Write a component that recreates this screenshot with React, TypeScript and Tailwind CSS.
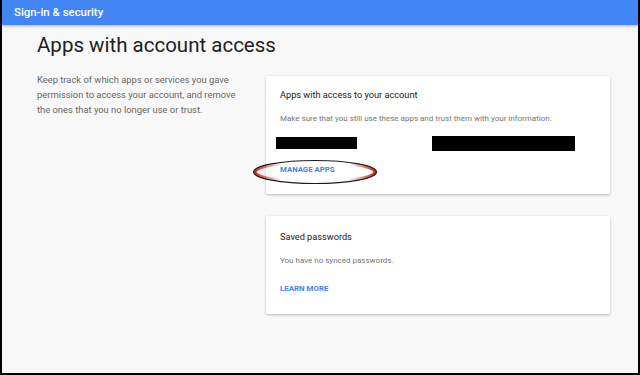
import React from 'react';

function Card({ children, className = '' }: { children: React.ReactNode; className?: string }) {
  return (
    <div className={`bg-white rounded-[2px] shadow-[0_1px_3px_rgba(0,0,0,0.25)] px-[14px] ${className}`}>
      {children}
    </div>
  );
}

export default function App() {
  return (
    <div
      className="w-[640px] h-[375px] bg-[#f8f8f8] border-l-2 border-r-2 border-b-2 border-black overflow-hidden flex flex-col"
      style={{ fontFamily: 'Roboto, "Liberation Sans", sans-serif' }}
    >
      {/* Top bar */}
      <div className="h-[25px] bg-[#4285f4] shadow-[0_1px_3px_rgba(0,0,0,0.3)] flex items-center pl-[12px] shrink-0">
        <span className="text-white text-[11.4px] font-medium">Sign-in &amp; security</span>
      </div>

      <div className="pl-[35px]">
        <h1 className="text-[20.5px] leading-none text-[#212121] mt-[10px]">Apps with account access</h1>

        <div className="flex mt-[22px]">
          <p className="w-[229px] text-[9.4px] leading-[15px] text-[#666] pr-4 -mt-[6px]">
            Keep track of which apps or services you gave permission to access your account, and remove the ones that you no longer use or trust.
          </p>

          <div className="w-[344px] flex flex-col gap-[22px] -mt-[2px]">
            {/* Apps card */}
            <Card className="relative h-[118px] pt-[12px]">
              <div className="text-[9.2px] text-[#212121] leading-[14px]">Apps with access to your account</div>
              <div className="text-[8px] text-[#757575] mt-[11px] leading-[12px]">
                Make sure that you still use these apps and trust them with your information.
              </div>
              <div className="flex mt-[11px] -ml-[4px]">
                <div className="w-[81px] h-[12px] bg-black mt-[1px]" />
                <div className="w-[143px] h-[15px] bg-black ml-[75px]" />
              </div>
              <div className="text-[7.8px] font-bold text-[#4a7fe6] mt-[13px] leading-[12px]">MANAGE APPS</div>
              <svg
                className="absolute left-[-14px] top-[83px]"
                width="126"
                height="26"
                viewBox="0 0 126 26"
              >
                <defs>
                  <linearGradient id="ends" x1="0" y1="0" x2="1" y2="0">
                    <stop offset="0" stopColor="#c62818" stopOpacity="1" />
                    <stop offset="0.22" stopColor="#c62818" stopOpacity="0" />
                    <stop offset="0.78" stopColor="#c62818" stopOpacity="0" />
                    <stop offset="1" stopColor="#c62818" stopOpacity="1" />
                  </linearGradient>
                </defs>
                <ellipse cx="63" cy="13" rx="60" ry="10" fill="none" stroke="url(#ends)" strokeWidth="3" />
                <ellipse cx="63" cy="13" rx="61.5" ry="11.5" fill="none" stroke="#1e1e1e" strokeWidth="1.2" />
              </svg>
            </Card>

            {/* Saved passwords card */}
            <Card className="h-[98px] pt-[14px]">
              <div className="text-[9.2px] text-[#212121] leading-[14px]">Saved passwords</div>
              <div className="text-[8px] text-[#757575] mt-[11px] leading-[12px]">You have no synced passwords.</div>
              <div className="text-[7.9px] font-bold text-[#4a7fe6] mt-[16px] leading-[12px]">LEARN MORE</div>
            </Card>
          </div>
        </div>
      </div>
    </div>
  );
}
